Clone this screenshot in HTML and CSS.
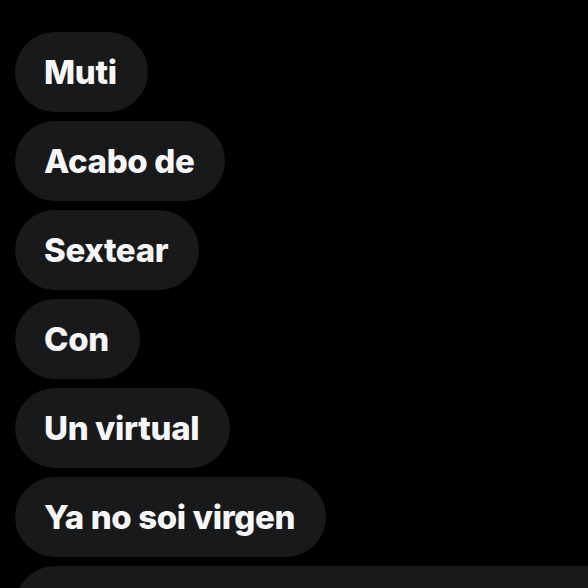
FILE: index.html
```html
<!DOCTYPE html>
<html lang="es">
<head>
<meta charset="utf-8">
<link rel="stylesheet" href="styles.css">
</head>
<body>
<div class="screen">
  <div class="chat">
    <div class="bubble">Muti</div>
    <div class="bubble">Acabo de</div>
    <div class="bubble">Sextear</div>
    <div class="bubble">Con</div>
    <div class="bubble">Un virtual</div>
    <div class="bubble">Ya no soi virgen</div>
    <div class="bubble bubble-wide"></div>
  </div>
</div>
</body>
</html>
```
FILE: styles.css
```css
html, body {
  margin: 0;
  padding: 0;
  background: #000;
}
.screen {
  width: 588px;
  height: 588px;
  overflow: hidden;
}
.chat {
  display: flex;
  flex-direction: column;
  align-items: flex-start;
  gap: 9px;
  padding: 32px 0 0 15px;
}
.bubble {
  box-sizing: border-box;
  height: 80px;
  display: flex;
  align-items: center;
  padding: 0 31px 0 29px;
  border-radius: 40px;
  background: #18191b;
  color: #f7f7f7;
  font-family: Inter, "Liberation Sans", sans-serif;
  font-weight: 800;
  font-size: 33px;
  letter-spacing: -0.35px;
  white-space: nowrap;
  flex-shrink: 0;
}
.bubble-wide {
  width: 573px;
  border-radius: 40px 0 0 40px;
}
```
